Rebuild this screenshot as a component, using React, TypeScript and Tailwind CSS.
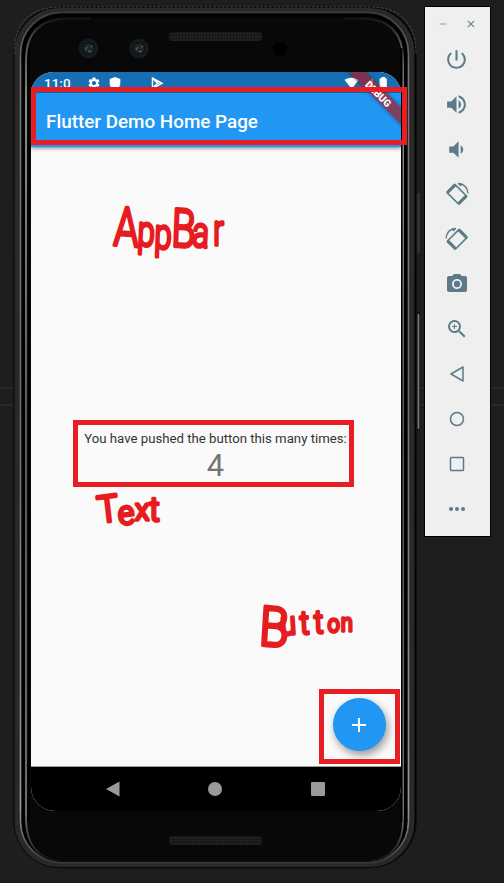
import type { ReactNode } from 'react';
import {
  MdClose,
  MdPhotoCamera,
  MdPowerSettingsNew,
  MdRemove,
  MdSettings,
  MdVolumeDown,
  MdVolumeUp,
  MdZoomIn,
} from 'react-icons/md';

function Bezel() {
  return (
    <svg className="pointer-events-none absolute left-0 top-0" width="408" height="864" viewBox="13 6 408 864" fill="none">
      <defs>
        <linearGradient id="outer" x1="0" y1="6" x2="0" y2="868" gradientUnits="userSpaceOnUse">
          <stop offset="0" stopColor="#343434" />
          <stop offset=".07" stopColor="#777" />
          <stop offset=".45" stopColor="#716f6e" />
          <stop offset=".93" stopColor="#999" />
          <stop offset="1" stopColor="#303030" />
        </linearGradient>
        <linearGradient id="inner" x1="0" y1="18" x2="0" y2="862" gradientUnits="userSpaceOnUse">
          <stop offset="0" stopColor="#151515" />
          <stop offset=".03" stopColor="#555" />
          <stop offset=".1" stopColor="#999" />
          <stop offset=".5" stopColor="#606065" />
          <stop offset=".94" stopColor="#77777c" />
          <stop offset="1" stopColor="#111" />
        </linearGradient>
        <pattern id="mesh" width="3" height="3" patternUnits="userSpaceOnUse">
          <rect width="3" height="3" fill="#171717" />
          <circle cx="1" cy="1" r=".8" fill="#303030" />
        </pattern>
      </defs>
      <rect x="416" y="193" width="4" height="60" rx="1" fill="#303030" />
      <rect x="416" y="312" width="4" height="119" rx="1" fill="#151515" />
      <rect x="417.6" y="314" width="1.7" height="115" rx=".8" fill="#777" />
      <rect x="13.5" y="6.5" width="403" height="861.5" rx="47" fill="#030303" stroke="#111" />
      <path d="M14.5 54V53Q14.5 7 61 7H369Q415 7 416 53" stroke="#555" strokeWidth=".8" strokeDasharray="3 1.3" />
      <rect x="17" y="10.5" width="395" height="854" rx="43" stroke="#292929" strokeWidth="5" />
      <rect x="20.5" y="12.5" width="388" height="850" rx="41" fill="#070707" stroke="url(#outer)" strokeWidth="1.8" />
      <rect x="23.2" y="15" width="382.5" height="845" rx="38" stroke="#000" strokeWidth="3" />
      <rect x="26" y="18" width="377" height="843" rx="35" fill="#080808" />
      <path d="M90 18.5H66Q26 20 26 60V820Q27 857 59 861M344 18.5H364Q403 20 403 60V820Q403 857 370 861" stroke="url(#inner)" strokeWidth="1.8" />
      <path d="M29 48V822M401.5 48V822" stroke="#000" strokeWidth="2" />
      <rect x="169" y="32" width="93" height="9" rx="3" fill="url(#mesh)" />
      <rect x="169" y="836" width="93" height="9" rx="3" fill="url(#mesh)" />
      {[88.5, 139].map((x) => (
        <g key={x}>
          <circle cx={x} cy="48.5" r="9.8" fill="#161b1e" />
          <circle cx={x} cy="48.5" r="5.8" fill="#202629" stroke="#101417" strokeWidth="1.5" />
          <path d={`M${x - 3} 50l2-3m3 0l2-1m-4 5l3 1`} stroke="#6b7071" />
        </g>
      ))}
      <circle cx="280" cy="48.5" r="7" fill="#000" />
    </svg>
  );
}

function StatusBar() {
  return (
    <div className="flex h-[21px] shrink-0 items-start bg-[#166fb5] pl-[13px] pt-[3px] text-white">
      <span className="w-[44px] text-[13.5px] font-medium leading-[16px]">11:0</span>
      <MdSettings className="-ml-px mt-px size-[14px]" />
      <svg className="ml-[8px] mt-[2px]" width="12" height="14" viewBox="0 0 12 14" fill="currentColor">
        <path d="M6 0l5.3 2v4.3C11.3 9.5 9 12.3 6 13 3 12.3.7 9.5.7 6.300V2z" />
      </svg>
      <svg className="ml-[30px] mt-[2px]" width="13" height="13" viewBox="0 0 13 13">
        <path d="M1.500 1.200L11 6.300 1.500 11.400z" fill="none" stroke="#fff" strokeWidth="1.5" />
        <path d="M1.500 1L6.500 6.300 1.500 11.500M4 3l4.500 4.500" stroke="#fff" strokeWidth="1.600" fill="none" />
      </svg>
      <svg className="ml-[180px] mt-[2px]" width="46" height="14" viewBox="0 0 46 14" fill="currentColor">
        <path d="M.5 2.800Q7.500-1.200 14.800 2.800L7.700 12z" />
        <path d="M29 1v12H18z" />
        <path d="M36.500 1.200h1V0h3.500v1.200h1q.8 0 .8.8v12h-7.200V2q0-.8.900-.8z" />
      </svg>
    </div>
  );
}

function RotateIcon({ flip = false }: { flip?: boolean }) {
  return (
    <svg width="24" height="24" viewBox="0 0 24 24" fill="none" className={flip ? '-scale-x-100' : ''}>
      <g transform="translate(11.800 12.300) rotate(-45)">
        <rect x="-6.500" y="-9.500" width="13" height="19" rx="1.800" fill="#5c7b89" />
        <rect x="-4.900" y="-6.300" width="9.800" height="12.600" fill="#efefef" />
      </g>
      <path d="M13 1.500Q22 2 23 11.500" stroke="#5c7b89" strokeWidth="1.300" />
      <path d="M12.500.7l5.500 1.200-2.600 2.600z" fill="#5c7b89" />
    </svg>
  );
}

function Outline({ children }: { children: ReactNode }) {
  return (
    <svg width="18" height="18" viewBox="0 0 18 18" fill="none" stroke="#5c7b89" strokeWidth="1.500" strokeLinejoin="round">
      {children}
    </svg>
  );
}

function Toolbar() {
  const tools: ReactNode[] = [
    <MdPowerSettingsNew className="size-[25px]" />,
    <MdVolumeUp className="size-[25px]" />,
    <MdVolumeDown className="size-[25px]" />,
    <RotateIcon />,
    <RotateIcon flip />,
    <MdPhotoCamera className="size-[24px]" />,
    <MdZoomIn className="size-[24px]" />,
    <Outline><path d="M15 2v14L3 9z" /></Outline>,
    <Outline><circle cx="9" cy="9" r="6.500" /></Outline>,
    <Outline><rect x="2.500" y="2.500" width="13" height="13" rx=".8" /></Outline>,
    <svg width="18" height="6" viewBox="0 0 18 6" fill="currentColor">
      <circle cx="3" cy="3" r="2" /><circle cx="9" cy="3" r="2" /><circle cx="15" cy="3" r="2" />
    </svg>,
  ];
  return (
    <aside className="relative ml-[7px] mt-[6px] h-[531px] w-[67px] shrink-0 border border-black bg-[#efefef] text-[#5c7b89]">
      <div className="flex h-[29.500px] items-center justify-between pl-[12px] pr-[13px] pt-[5px]">
        <MdRemove className="size-[12px] text-[#91999d]" />
        <MdClose className="size-[12px]" />
      </div>
      <div className="flex flex-col pr-[1.500px]">
        {tools.map((tool, i) => (
          <div key={i} className="flex h-[45px] items-center justify-center">{tool}</div>
        ))}
      </div>
    </aside>
  );
}

function Notes() {
  return (
    <svg
      className="pointer-events-none absolute left-0 top-0 font-['Roboto'] font-light"
      width="504"
      height="883"
      fill="#e51c20"
      stroke="#e51c20"
      strokeWidth="3.5"
      strokeLinejoin="round"
    >
      <text transform="translate(114 245) scale(.74 1)" x="-1 31 54 77 105 134" y="0 0 3 1 1 0" rotate="3 4 3 3 4 0" fontSize="42">
        <tspan fontSize="54">A</tspan>pp<tspan fontSize="53">B</tspan>ar
      </text>
      <text transform="translate(101 523) scale(.95 1)" x="-2 19 36 51" y="0 2 -3 -2" rotate="-7 -6 0 0" fontSize="33">
        <tspan fontSize="37">T</tspan>e<tspan fontSize="30">x</tspan>t
      </text>
      <text transform="translate(260 634) scale(.88 1)" x="-2 24 46 62 77 92" y="11 1 0 -1 -2 -3" rotate="4 -4 -3 -2 0 0" fontSize="32">
        <tspan fontSize="55">B</tspan><tspan fontSize="32">u</tspan>tt<tspan fontSize="24">on</tspan>
      </text>
    </svg>
  );
}

export default function App() {
  return (
    <main className="relative flex h-[883px] w-[504px] overflow-hidden bg-[#1e1e1e] font-['Roboto',sans-serif]">
      <div className="absolute left-0 top-[387px] h-[19px] w-full border-y-2 border-[#292929]" />
      <section className="relative isolate ml-[13px] mt-[6px] h-[862px] w-[404px] shrink-0 pl-[18px] pt-[66px]">
        <Bezel />
        <div className="relative flex h-[739px] w-[370px] flex-col overflow-hidden rounded-b-[24px] rounded-t-[22px] bg-[#fafafa]">
          <StatusBar />
          <header className="z-10 flex h-[54px] shrink-0 items-center bg-[#2196f3] pl-[15px] pt-[4px] text-white shadow-[0_1px_4px_#0008]">
            <h1 className="whitespace-nowrap text-[18.850px] font-medium">Flutter Demo Home Page</h1>
          </header>
          <div className="flex h-[620px] shrink-0 flex-col items-center border-b border-[#999] pt-[283px]">
            <p className="whitespace-nowrap pr-px text-[13.200px] leading-[18px] text-[#333]">You have pushed the button this many times:</p>
            <p className="pr-px text-[31px] leading-[36px] text-[#757575]">4</p>
            <button className="mr-[15.500px] mt-[214px] flex size-[53px] shrink-0 items-center justify-center self-end rounded-full bg-[#2196f3] text-white shadow-[2px_4px_8px_#0006]">
              <svg width="14" height="14" viewBox="0 0 14 14" stroke="currentColor" strokeWidth="2">
                <path d="M7 0v14M0 7h14" />
              </svg>
            </button>
          </div>
          <nav className="flex grow items-center justify-between bg-black pl-[75px] pr-[76px] text-[#999]">
            <svg width="14" height="16" viewBox="0 0 14 16" fill="currentColor"><path d="M13.500.5v15L0 8z" /></svg>
            <span className="size-[14px] rounded-full bg-[#999]" />
            <span className="size-[14.500px] rounded-[1px] bg-[#999]" />
          </nav>
          <div className="absolute left-[303px] top-[16px] z-20 flex h-[12px] w-[90px] rotate-45 items-center justify-center bg-[#a81a24]/70 pr-[1px] text-[10px] font-black text-white shadow-[0_0_4px_#0006]">
            DEBUG
          </div>
        </div>
      </section>
      <Toolbar />
      <div className="absolute left-[31px] top-[87px] h-[58px] w-[376px] border-[5px] border-[#e81e25]" />
      <div className="absolute left-[73px] top-[420px] h-[67px] w-[281px] border-[5px] border-[#e81e25]" />
      <div className="absolute left-[319px] top-[689px] h-[75px] w-[81px] border-[5px] border-[#e81e25]" />
      <Notes />
    </main>
  );
}
